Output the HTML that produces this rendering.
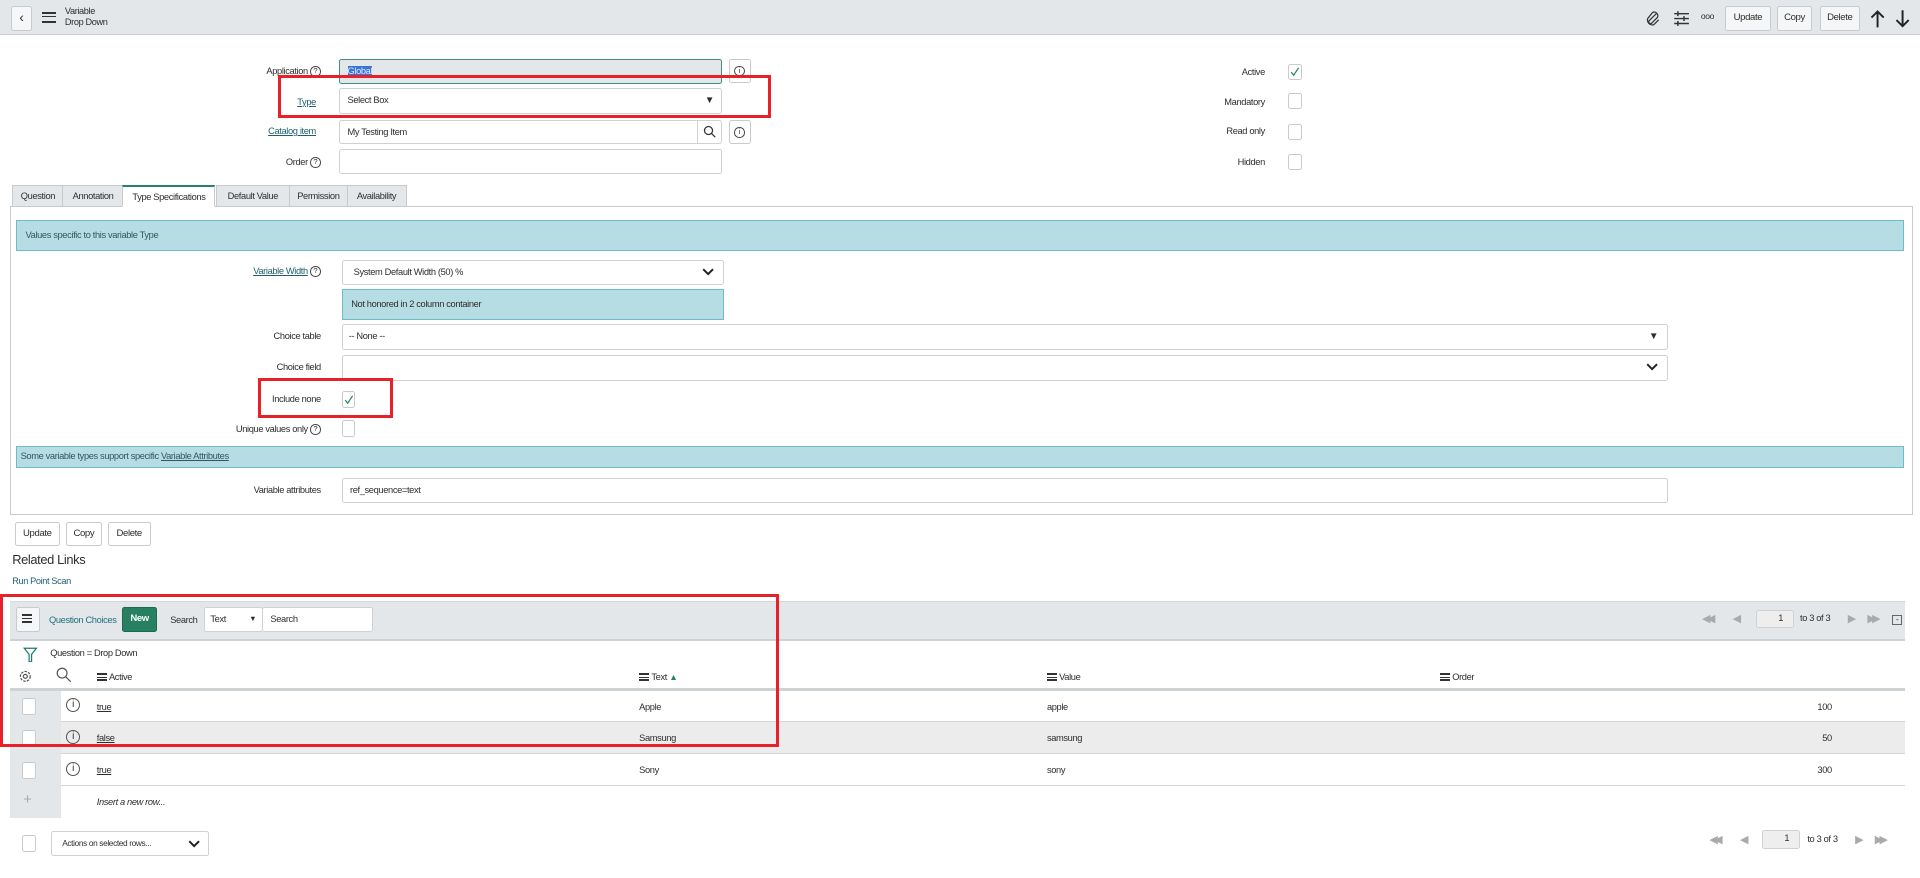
<!DOCTYPE html>
<html><head><meta charset="utf-8">
<style>
html,body{margin:0;padding:0;background:#fff;overflow:hidden;width:1920px;height:877px}
#w{position:absolute;left:0;top:0;width:1568px;height:717px;zoom:1.22449;font-family:"Liberation Sans",sans-serif;font-size:7.6px;color:#2e2e2e;letter-spacing:-0.3px}
.a{position:absolute}
.lbl{position:absolute;text-align:right;white-space:nowrap}
.in{position:absolute;background:#fff;border:1px solid #cfd2d5;border-radius:2px;box-sizing:border-box;white-space:nowrap;padding-left:6px}
.btn{position:absolute;background:#f5f6f7;border:1px solid #c8cbce;border-radius:2px;box-sizing:border-box;text-align:center;font-size:7.8px}
.cb{position:absolute;width:11px;height:13px;border:1px solid #c8cbce;border-radius:2px;box-sizing:border-box;background:#fff}
.lnk{color:#1f5f6e;text-decoration:underline}
.red{position:absolute;border:3px solid #e8202a;box-sizing:border-box}
.q{display:inline-block;width:7px;height:7px;border:1px solid #444;border-radius:50%;font-size:6px;line-height:7px;text-align:center;vertical-align:middle;margin-left:2px;letter-spacing:0}
.tab{position:absolute;top:151px;height:18px;background:#e4e7ea;border:1px solid #c8cbce;box-sizing:border-box;line-height:17px;text-align:center;font-size:7.6px}
.info{position:absolute;background:#b7dde4;border:1px solid #6dbcc9;box-sizing:border-box;color:#31575e}
.row{position:absolute;left:8px;width:1548px;height:26px;border-bottom:1px solid #d5d5d5;box-sizing:border-box}
.ham{display:inline-block;width:8px;height:7px;border-top:2px solid #333;border-bottom:2px solid #333;box-sizing:border-box;position:relative;vertical-align:-1px;margin-right:2px}
.ham:after{content:"";position:absolute;left:0;right:0;top:1.5px;height:1px;background:#333}
.ck{position:absolute;left:1px;top:1px}
</style></head><body><div id="w">
<div class="a" style="left:0;top:0;width:1568px;height:28px;background:#e4e7ea;border-bottom:1px solid #c9ccd0"></div>
<div class="btn" style="left:9px;top:5px;width:17px;height:20px;line-height:18px;font-size:11px">&#8249;</div>
<div class="a" style="left:34px;top:10px"><span class="ham" style="width:12px;height:9px"></span></div>
<div class="a" style="left:53px;top:5px;font-size:7.5px;line-height:9px">Variable<br>Drop Down</div>
<svg class="a" style="left:1343px;top:8px" width="14" height="14" viewBox="0 0 14 14"><path d="M10 3 L4 9 a1.5 1.5 0 0 0 2 2 L11 6 a3 3 0 0 0 -4 -4 L3 7 a4 4 0 0 0 5 5 L12 8" fill="none" stroke="#333" stroke-width="1"/></svg>
<svg class="a" style="left:1366px;top:8px" width="14" height="14" viewBox="0 0 14 14"><path d="M1 3h12M1 7h12M1 11h12" stroke="#333" stroke-width="1.2"/><path d="M4 1v4M9 5v4M4 9v4" stroke="#333" stroke-width="1.2"/></svg>
<div class="a" style="left:1389px;top:9px;font-size:7px">ooo</div>
<div class="btn" style="left:1409px;top:5px;width:37px;height:20px;line-height:18px">Update</div>
<div class="btn" style="left:1451px;top:5px;width:29px;height:20px;line-height:18px">Copy</div>
<div class="btn" style="left:1486px;top:5px;width:33px;height:20px;line-height:18px">Delete</div>
<svg class="a" style="left:1526px;top:7px" width="14" height="16" viewBox="0 0 14 16"><path d="M7 15V2M2 7l5-5 5 5" fill="none" stroke="#222" stroke-width="1.6"/></svg>
<svg class="a" style="left:1547px;top:7px" width="14" height="16" viewBox="0 0 14 16"><path d="M7 1v13M2 9l5 5 5-5" fill="none" stroke="#222" stroke-width="1.6"/></svg>

<div class="lbl" style="right:1306px;top:54px">Application<span class="q">?</span></div>
<div class="in" style="left:277px;top:48px;width:313px;height:21px;background:#e4e7ea;border-color:#3d8f86;line-height:19px"><span style="background:#3875d7;color:#dfe9f9">Global</span></div>
<div class="btn" style="left:595px;top:48px;width:18px;height:20px;background:#fff"><span class="q" style="margin:5px 0 0">i</span></div>
<div class="lbl lnk" style="right:1310px;top:79px">Type</div>
<div class="in" style="left:277px;top:72px;width:313px;height:21px;line-height:19px">Select Box<span style="position:absolute;right:6px;font-size:8px">&#9660;</span></div>
<div class="lbl lnk" style="right:1310px;top:103px">Catalog item</div>
<div class="in" style="left:277px;top:98px;width:313px;height:20px;line-height:18px">My Testing Item</div>
<div class="a" style="left:569px;top:98px;width:21px;height:20px;border-left:1px solid #cfd2d5"></div>
<svg class="a" style="left:574px;top:102px" width="11" height="11"><circle cx="4.5" cy="4.5" r="3.3" fill="none" stroke="#333"/><path d="M7 7l3 3" stroke="#333"/></svg>
<div class="btn" style="left:595px;top:98px;width:18px;height:20px;background:#fff"><span class="q" style="margin:5px 0 0">i</span></div>
<div class="lbl" style="right:1306px;top:128px">Order<span class="q">?</span></div>
<div class="in" style="left:277px;top:122px;width:313px;height:20px"></div>
<div class="red" style="left:227px;top:61px;width:403px;height:35px"></div>

<div class="lbl" style="right:535px;top:55px">Active</div>
<div class="cb" style="left:1052px;top:52px"><svg class="ck" width="8" height="9"><path d="M1 5l2 2.5L7 1.5" fill="none" stroke="#278062" stroke-width="1"/></svg></div>
<div class="lbl" style="right:535px;top:79px">Mandatory</div><div class="cb" style="left:1052px;top:76px"></div>
<div class="lbl" style="right:535px;top:103px">Read only</div><div class="cb" style="left:1052px;top:101px"></div>
<div class="lbl" style="right:535px;top:128px">Hidden</div><div class="cb" style="left:1052px;top:126px"></div>

<div class="a" style="left:8px;top:168px;width:1554px;height:253px;border:1px solid #c8cbce;box-sizing:border-box"></div>
<div class="tab" style="left:10px;width:42px">Question</div>
<div class="tab" style="left:51px;width:50px">Annotation</div>
<div class="tab" style="left:100px;width:76px;background:#fff;border-top:2px solid #2e7d72;border-bottom-color:#fff">Type Specifications</div>
<div class="tab" style="left:176px;width:61px">Default Value</div>
<div class="tab" style="left:236px;width:48px">Permission</div>
<div class="tab" style="left:283px;width:49px">Availability</div>

<div class="info" style="left:13px;top:180px;width:1542px;height:25px;line-height:23px;padding-left:7px">Values specific to this variable Type</div>
<div class="lbl" style="right:1306px;top:217px"><span class="lnk">Variable Width</span><span class="q">?</span></div>
<div class="in" style="left:279px;top:212px;width:312px;height:21px;line-height:19px;padding-left:9px">System Default Width (50) %<svg style="position:absolute;right:7px;top:6px" width="10" height="7"><path d="M1 1l4 4 4-4" fill="none" stroke="#222" stroke-width="1.6"/></svg></div>
<div class="info" style="left:279px;top:236px;width:312px;height:25px;line-height:23px;padding-left:7px;color:#2e2e2e">Not honored in 2 column container</div>
<div class="lbl" style="right:1306px;top:270px">Choice table</div>
<div class="in" style="left:279px;top:265px;width:1083px;height:21px;line-height:19px;padding-left:5px">-- None --<span style="position:absolute;right:7px;font-size:8px">&#9660;</span></div>
<div class="lbl" style="right:1306px;top:296px">Choice field</div>
<div class="in" style="left:279px;top:290px;width:1083px;height:21px"><svg style="position:absolute;right:7px;top:6px" width="10" height="7"><path d="M1 1l4 4 4-4" fill="none" stroke="#222" stroke-width="1.6"/></svg></div>
<div class="lbl" style="right:1306px;top:322px">Include none</div>
<div class="cb" style="left:279px;top:319px;height:14px"><svg class="ck" style="top:2px" width="8" height="9"><path d="M1 5l2 2.5L7 1.5" fill="none" stroke="#278062" stroke-width="1"/></svg></div>
<div class="red" style="left:211px;top:309px;width:110px;height:32px"></div>
<div class="lbl" style="right:1306px;top:346px">Unique values only<span class="q">?</span></div>
<div class="cb" style="left:279px;top:343px;height:14px"></div>
<div class="info" style="left:13px;top:364px;width:1542px;height:18px;line-height:16px;padding-left:3px">Some variable types support specific <span class="lnk" style="color:#31575e">Variable Attributes</span></div>
<div class="lbl" style="right:1306px;top:396px">Variable attributes</div>
<div class="in" style="left:279px;top:390px;width:1083px;height:21px;line-height:19px">ref_sequence=text</div>

<div class="btn" style="left:12px;top:426px;width:37px;height:20px;line-height:18px;background:#fff">Update</div>
<div class="btn" style="left:54px;top:426px;width:29px;height:20px;line-height:18px;background:#fff">Copy</div>
<div class="btn" style="left:88px;top:426px;width:35px;height:20px;line-height:18px;background:#fff">Delete</div>
<div class="a" style="left:10px;top:451px;font-size:10.5px">Related Links</div>
<div class="a" style="left:10px;top:470px;font-size:7.5px;color:#1f5f6e">Run Point Scan</div>

<div class="a" style="left:8px;top:491px;width:1548px;height:30px;background:#e4e7ea;border-top:1px solid #d5d8db;border-bottom:2px solid #cfd2d5"></div>
<div class="btn" style="left:13px;top:496px;width:20px;height:20px;line-height:18px"><span class="ham"></span></div>
<div class="a" style="left:40px;top:502px;color:#1f6f7e">Question Choices</div>
<div class="btn" style="left:100px;top:496px;width:28px;height:20px;line-height:18px;background:#278062;border-color:#1d6a51;color:#fff;font-weight:bold">New</div>
<div class="a" style="left:139px;top:502px">Search</div>
<div class="in" style="left:167px;top:496px;width:48px;height:20px;line-height:18px;padding-left:4px">Text<span style="position:absolute;right:5px;font-size:6px">&#9660;</span></div>
<div class="in" style="left:214px;top:496px;width:91px;height:20px;line-height:18px;padding-left:6px">Search</div>
<div class="a" style="left:1390px;top:500px;color:#aaa;font-size:9px;letter-spacing:-3px">&#9664;&#9664;</div>
<div class="a" style="left:1415px;top:500px;color:#aaa;font-size:9px">&#9664;</div>
<div class="in" style="left:1434px;top:498px;width:31px;height:15px;background:#eee;text-align:right;padding-right:8px;line-height:13px">1</div>
<div class="a" style="left:1470px;top:501px">to 3 of 3</div>
<div class="a" style="left:1509px;top:500px;color:#aaa;font-size:9px">&#9654;</div>
<div class="a" style="left:1525px;top:500px;color:#aaa;font-size:9px;letter-spacing:-3px">&#9654;&#9654;</div>
<div class="a" style="left:1545px;top:502px;width:7px;height:7px;border:1px solid #666;font-size:7px;line-height:6px;text-align:center">-</div>

<svg class="a" style="left:19px;top:528px" width="12" height="13"><path d="M1 1h10L7 6v6H5V6z" fill="none" stroke="#1f7a6e"/></svg>
<div class="a" style="left:41px;top:529px">Question = Drop Down</div>
<svg class="a" style="left:15px;top:546px" width="12" height="12"><circle cx="6" cy="6" r="4" fill="none" stroke="#555" stroke-dasharray="2 1"/><circle cx="6" cy="6" r="1.6" fill="none" stroke="#555"/></svg>
<svg class="a" style="left:46px;top:545px" width="13" height="13"><circle cx="5" cy="5" r="4" fill="none" stroke="#555"/><path d="M8 8l4 4" stroke="#555"/></svg>
<div class="a" style="left:79px;top:549px"><span class="ham"></span>Active</div>
<div class="a" style="left:522px;top:549px"><span class="ham"></span>Text <span style="color:#278062;font-size:7px">&#9650;</span></div>
<div class="a" style="left:855px;top:549px"><span class="ham"></span>Value</div>
<div class="a" style="left:1176px;top:549px"><span class="ham"></span>Order</div>
<div class="a" style="left:8px;top:562px;width:1548px;height:2px;background:#cfd2d5"></div>

<div class="row" style="top:564px"></div>
<div class="row" style="top:590px;background:#ececec"></div>
<div class="row" style="top:616px"></div>
<div class="a" style="left:8px;top:564px;width:42px;height:104px;background:#e4e7ea"></div>
<div class="cb" style="left:18px;top:570px;height:14px"></div>
<div class="cb" style="left:18px;top:596px;height:14px"></div>
<div class="cb" style="left:18px;top:622px;height:14px"></div>
<div class="a" style="left:52px;top:570px"><span class="q" style="width:10px;height:10px;line-height:10px;font-size:8px;border-color:#555">i</span></div>
<div class="a" style="left:52px;top:596px"><span class="q" style="width:10px;height:10px;line-height:10px;font-size:8px;border-color:#555">i</span></div>
<div class="a" style="left:52px;top:622px"><span class="q" style="width:10px;height:10px;line-height:10px;font-size:8px;border-color:#555">i</span></div>
<div class="a lnk" style="left:79px;top:573px;color:#2e2e2e">true</div>
<div class="a lnk" style="left:79px;top:599px;color:#2e2e2e">false</div>
<div class="a lnk" style="left:79px;top:625px;color:#2e2e2e">true</div>
<div class="a" style="left:522px;top:573px">Apple</div>
<div class="a" style="left:522px;top:599px">Samsung</div>
<div class="a" style="left:522px;top:625px">Sony</div>
<div class="a" style="left:855px;top:573px">apple</div>
<div class="a" style="left:855px;top:599px">samsung</div>
<div class="a" style="left:855px;top:625px">sony</div>
<div class="lbl" style="right:72px;top:573px">100</div>
<div class="lbl" style="right:72px;top:599px">50</div>
<div class="lbl" style="right:72px;top:625px">300</div>
<div class="a" style="left:19px;top:647px;color:#aaa;font-size:12px">+</div>
<div class="a" style="left:79px;top:651px;font-style:italic">Insert a new row...</div>
<div class="red" style="left:0;top:485px;width:636px;height:125px"></div>

<div class="cb" style="left:18px;top:682px;height:14px"></div>
<div class="in" style="left:42px;top:679px;width:129px;height:20px;line-height:18px;padding-left:8px;font-size:6.8px">Actions on selected rows...<svg style="position:absolute;right:7px;top:6px" width="10" height="7"><path d="M1 1l4 4 4-4" fill="none" stroke="#222" stroke-width="1.6"/></svg></div>
<div class="a" style="left:1396px;top:680px;color:#aaa;font-size:9px;letter-spacing:-3px">&#9664;&#9664;</div>
<div class="a" style="left:1421px;top:680px;color:#aaa;font-size:9px">&#9664;</div>
<div class="in" style="left:1439px;top:678px;width:31px;height:15px;background:#eee;text-align:right;padding-right:8px;line-height:13px">1</div>
<div class="a" style="left:1476px;top:681px">to 3 of 3</div>
<div class="a" style="left:1515px;top:680px;color:#aaa;font-size:9px">&#9654;</div>
<div class="a" style="left:1531px;top:680px;color:#aaa;font-size:9px;letter-spacing:-3px">&#9654;&#9654;</div>
</div></body></html>
